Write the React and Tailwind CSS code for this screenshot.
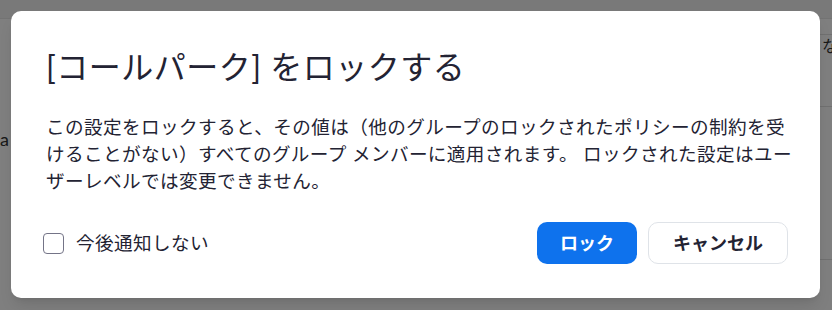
import React from "react";

export default function App() {
  const font = { fontFamily: "Lato, 'Noto Sans CJK JP', sans-serif" };
  return (
    <div className="relative w-[832px] h-[310px] overflow-hidden bg-white" style={font}>
      {/* background page */}
      <div className="flex flex-col w-full h-full">
        <div className="h-[19px] bg-[#f2f2f2] border-b border-[#e6e6e6]"></div>
        <div className="flex flex-1">
          <div className="w-[20px] pt-[108px] text-[18px] leading-[24px] text-[#333]">a</div>
          <div className="flex-1"></div>
          <div className="w-[12px] flex flex-col">
            <div className="h-[16px] border-b border-[#e0e0e0]"></div>
            <div className="h-[72px] border-b border-[#e0e0e0] text-[16px] text-[#333] pl-[2px] pt-[1px] leading-[20px]">な</div>
            <div className="h-[153px] border-b border-[#e0e0e0]"></div>
          </div>
        </div>
      </div>
      {/* overlay */}
      <div className="absolute inset-0 bg-black/50"></div>
      {/* dialog */}
      <div className="absolute left-[11px] top-[11px] w-[809px] h-[287px] bg-white rounded-[10px] shadow-lg px-[32px] pt-[32px] pb-[34px] flex flex-col">
        <h1 className="text-[32px] leading-[48px] tracking-[0.5px] text-[#232333] font-normal pl-[3px]">
          [コールパーク] をロックする
        </h1>
        <p className="mt-[23px] text-[18.6px] leading-[27px] tracking-[0.4px] text-[#232333] pl-[3px] whitespace-nowrap">
          この設定をロックすると、その値は（他のグループのロックされたポリシーの制約を受
          <br />
          けることがない）すべてのグループ メンバーに適用されます。 ロックされた設定はユー
          <br />
          ザーレベルでは変更できません。
        </p>
        <div className="mt-auto flex items-center justify-between">
          <label className="flex items-center gap-[12px]">
            <span className="w-[21px] h-[21px] rounded-[4px] border border-[#747487] bg-white"></span>
            <span className="text-[18.6px] leading-[27px] tracking-[0.4px] text-[#232333]">今後通知しない</span>
          </label>
          <div className="flex items-center gap-[11px]">
            <button className="w-[100px] h-[42px] rounded-[10px] bg-[#0e72ed] text-white text-[18px] font-bold">
              ロック
            </button>
            <button className="w-[140px] h-[42px] rounded-[10px] bg-white border border-[#dfe3e8] text-[#232333] text-[18px] font-bold">
              キャンセル
            </button>
          </div>
        </div>
      </div>
    </div>
  );
}
